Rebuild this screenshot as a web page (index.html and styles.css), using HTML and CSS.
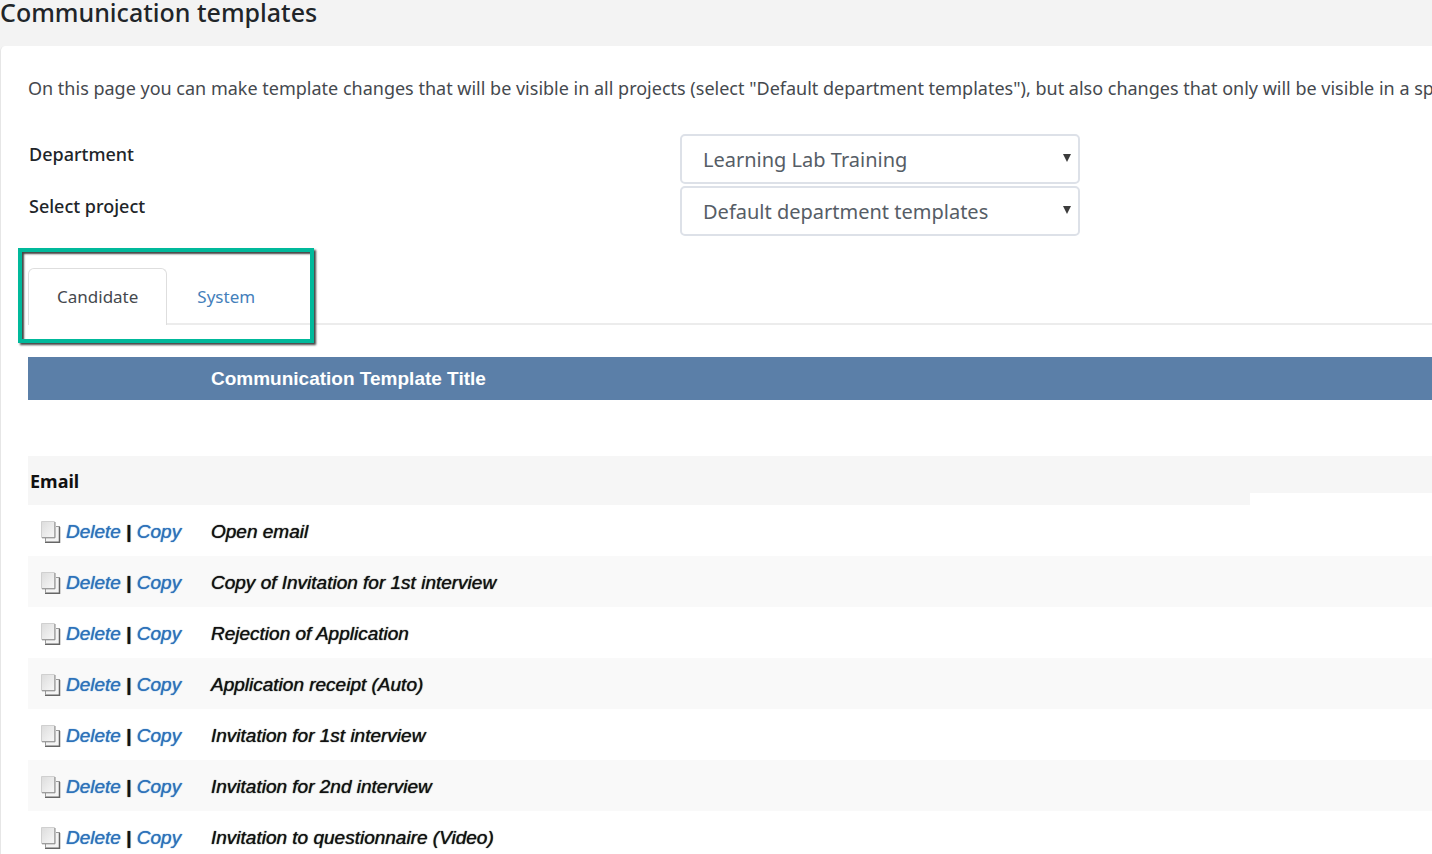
FILE: index.html
```html
<!DOCTYPE html>
<html lang="en">
<head>
<meta charset="utf-8">
<title>Communication templates</title>
<link rel="stylesheet" href="styles.css">
</head>
<body>
<svg class="sprite" aria-hidden="true">
  <defs>
    <linearGradient id="sheet" x1="0" y1="0" x2="1" y2="1">
      <stop offset="0" stop-color="#dcdcdc"/><stop offset="1" stop-color="#f8f8f8"/>
    </linearGradient>
  </defs>
  <symbol id="pages" viewBox="0 0 22 24">
    <path d="M5 7h14v15H5z" fill="#f4f4f4"/>
    <path d="M5 22.200h14.500V7" fill="none" stroke="#666" stroke-width="1.500"/>
    <path d="M5.500 18v4M16 6.500h4" fill="none" stroke="#999"/>
    <path d="M1.500 1.500h13v16h-13z" fill="url(#sheet)" stroke="#d0d0d0"/>
    <path d="M2 17.800h13V2" fill="none" stroke="#888"/>
  </symbol>
</svg>
<h1 class="page-title">Communication templates</h1>
<main class="panel">
  <p class="intro">On this page you can make template changes that will be visible in all projects (select "Default department templates"), but also changes that only will be visible in a specific project.</p>
  <form class="filters">
    <label class="filter-label" for="department">Department</label>
    <div class="select-wrap">
      <select class="select" id="department"><option>Learning Lab Training</option></select>
      <svg class="arrow" viewBox="0 0 8 8" aria-hidden="true"><path d="M0 0h8L4 8z"/></svg>
    </div>
    <label class="filter-label" for="project">Select project</label>
    <div class="select-wrap">
      <select class="select" id="project"><option>Default department templates</option></select>
      <svg class="arrow" viewBox="0 0 8 8" aria-hidden="true"><path d="M0 0h8L4 8z"/></svg>
    </div>
  </form>
  <div class="tabs" role="tablist">
    <button class="tab tab-active" type="button" role="tab" aria-selected="true">Candidate</button>
    <button class="tab" type="button" role="tab" aria-selected="false">System</button>
    <div class="callout"></div>
  </div>
  <table class="templates">
    <colgroup><col class="col-actions"><col></colgroup>
    <thead>
      <tr><th></th><th>Communication Template Title</th></tr>
    </thead>
    <tbody>
      <tr class="spacer"><td colspan="2"></td></tr>
      <tr class="group"><th colspan="2" scope="rowgroup">Email</th></tr>
      <tr class="item"><td><div class="actions"><svg class="icon" aria-hidden="true"><use href="#pages"/></svg><span><a href="#">Delete</a> <b>|</b> <a href="#">Copy</a></span></div></td><td>Open email</td></tr>
      <tr class="item shaded"><td><div class="actions"><svg class="icon" aria-hidden="true"><use href="#pages"/></svg><span><a href="#">Delete</a> <b>|</b> <a href="#">Copy</a></span></div></td><td>Copy of Invitation for 1st interview</td></tr>
      <tr class="item"><td><div class="actions"><svg class="icon" aria-hidden="true"><use href="#pages"/></svg><span><a href="#">Delete</a> <b>|</b> <a href="#">Copy</a></span></div></td><td>Rejection of Application</td></tr>
      <tr class="item shaded"><td><div class="actions"><svg class="icon" aria-hidden="true"><use href="#pages"/></svg><span><a href="#">Delete</a> <b>|</b> <a href="#">Copy</a></span></div></td><td>Application receipt (Auto)</td></tr>
      <tr class="item"><td><div class="actions"><svg class="icon" aria-hidden="true"><use href="#pages"/></svg><span><a href="#">Delete</a> <b>|</b> <a href="#">Copy</a></span></div></td><td>Invitation for 1st interview</td></tr>
      <tr class="item shaded"><td><div class="actions"><svg class="icon" aria-hidden="true"><use href="#pages"/></svg><span><a href="#">Delete</a> <b>|</b> <a href="#">Copy</a></span></div></td><td>Invitation for 2nd interview</td></tr>
      <tr class="item"><td><div class="actions"><svg class="icon" aria-hidden="true"><use href="#pages"/></svg><span><a href="#">Delete</a> <b>|</b> <a href="#">Copy</a></span></div></td><td>Invitation to questionnaire (Video)</td></tr>
    </tbody>
  </table>
</main>
</body>
</html>
```

FILE: styles.css
```css
* { box-sizing: border-box; }

body {
  margin: 0;
  overflow: hidden;
  background: #f3f3f3;
  color: #212529;
  font-family: "Noto Sans", "Open Sans", sans-serif;
  font-size: 18px;
}

.sprite { position: absolute; width: 0; height: 0; }

.page-title {
  margin: 0;
  height: 46px;
  font-size: 25px;
  font-weight: 500;
  line-height: 24px;
}

.panel {
  padding: 28px 0 0 27px;
  background: #fff;
  border-left: 1px solid #e6e6e6;
  border-top-left-radius: 5px;
}

.intro {
  margin: 0 0 32px;
  overflow: hidden;
  color: #45494e;
  line-height: 28px;
  white-space: nowrap;
}

.filters {
  display: grid;
  grid-template-columns: 652px 400px;
  row-gap: 2px;
}

.filter-label {
  padding: 7px 0 0 1px;
  font-weight: 500;
  line-height: 26px;
}

.select-wrap { position: relative; }

.select {
  width: 100%;
  height: 50px;
  padding: 0 21px;
  appearance: none;
  background: #fff;
  border: 2px solid #dde1e8;
  border-radius: 5px;
  color: #565d66;
  font: inherit;
  font-size: 20px;
}

.arrow {
  position: absolute;
  top: 20px;
  right: 9px;
  width: 8px;
  height: 8px;
  fill: #3c3c3c;
  pointer-events: none;
}

.tabs {
  position: relative;
  display: flex;
  height: 57px;
  margin-top: 32px;
  border-bottom: 2px solid #ececec;
}

.tab {
  height: 57px;
  padding: 0 30px;
  background: none;
  border: 0;
  color: #4480bb;
  font: inherit;
  font-size: 17px;
}

.tab-active {
  padding: 0 28px 2px;
  background: #fff;
  border: 1px solid #dedede;
  border-bottom: 0;
  border-radius: 6px 6px 0 0;
  color: #45494e;
}

.callout {
  position: absolute;
  top: -20px;
  left: -10px;
  width: 296px;
  height: 95px;
  border: 4px solid #00b99b;
  box-shadow: 2px 2px 2px #444, inset 2px 2px 2px #444;
  pointer-events: none;
}

.templates {
  width: 100%;
  margin-top: 32px;
  border-collapse: collapse;
  table-layout: fixed;
  color: #111;
  font-family: "Liberation Sans", Arial, sans-serif;
  font-size: 19px;
}

.col-actions { width: 183px; }

.templates th,
.templates td { padding: 0; text-align: left; }

.templates thead th {
  height: 43px;
  background: #5b7fa8;
  color: #fff;
}

.spacer td { height: 56px; }

.templates .group th {
  height: 49px;
  padding-left: 2px;
  background: linear-gradient(#fff, #fff) right bottom / 182px 12px no-repeat #f6f6f6;
  font-family: "Noto Sans", "Open Sans", sans-serif;
  font-size: 18px;
}

.item td {
  height: 51px;
  font-style: italic;
  text-shadow: 0 0 1px currentColor;
}

.templates .item td { padding-top: 2px; }

.shaded { background: #f9f9f9; }

.actions {
  display: flex;
  align-items: center;
  gap: 4px;
  padding-left: 12px;
}

.actions a { color: #2d72ba; text-decoration: none; }
.actions b { font-style: normal; }

.icon { width: 22px; height: 24px; }
```
